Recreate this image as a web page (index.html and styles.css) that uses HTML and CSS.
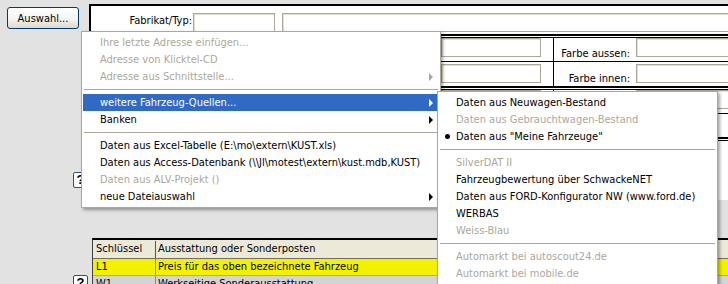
FILE: index.html
```html
<!DOCTYPE html>
<html lang="de">
<head>
    <meta charset="UTF-8">
    <title>Fahrzeugauswahl</title>
    <link rel="stylesheet" href="styles.css">
</head>
<body>
    <div class="screen">
        <div class="side">
            <button class="btn">Auswahl...</button>
            <span class="help help-top">?</span>
        </div>
        <div class="frame">
            <div class="row row-head">
                <span class="lbl lbl-typ">Fabrikat/Typ:</span>
                <span class="field field-typ"></span>
                <span class="field field-wide"></span>
            </div>
            <div class="rule-double"></div>
            <div class="row">
                <div class="cell-a"><span class="field field-a"></span></div>
                <div class="cell-b"><span class="lbl">Farbe aussen:</span><span class="field field-b"></span></div>
            </div>
            <div class="rule"></div>
            <div class="row row-gap">
                <div class="cell-a"><span class="field field-a"></span></div>
                <div class="cell-b"><span class="lbl">Farbe innen:</span><span class="field field-b"></span></div>
            </div>
            <div class="rule-double"></div>
            <div class="row">
                <div class="cell-a"><span class="field field-a"></span></div>
                <div class="cell-b"><span class="lbl"></span><span class="field field-b"></span></div>
            </div>
            <div class="rule"></div>
            <div class="row">
                <div class="cell-a"></div>
                <div class="cell-b"></div>
            </div>
            <div class="rule-double"></div>
        </div>
    </div>

    <div class="lower">
        <div class="side side-low">
            <span class="help">?</span>
        </div>
        <div class="grid">
            <div class="grid-row grid-head">
                <span class="c1">Schlüssel</span>
                <span class="c2">Ausstattung oder Sonderposten</span>
            </div>
            <div class="grid-row grid-sel">
                <span class="c1">L1</span>
                <span class="c2">Preis für das oben bezeichnete Fahrzeug</span>
            </div>
            <div class="grid-row">
                <span class="c1">W1</span>
                <span class="c2">Werkseitige Sonderausstattung</span>
            </div>
        </div>
    </div>

    <!-- Kontextmenue -->
    <div class="menu main-menu">
        <div class="item off">Ihre letzte Adresse einfügen...</div>
        <div class="item off">Adresse von Klicktel-CD</div>
        <div class="item off">Adresse aus Schnittstelle...<span class="arrow"></span></div>
        <div class="sep"></div>
        <div class="item hot">weitere Fahrzeug-Quellen...<span class="arrow"></span></div>
        <div class="item">Banken<span class="arrow"></span></div>
        <div class="sep"></div>
        <div class="item">Daten aus Excel-Tabelle (E:\mo\extern\KUST.xls)</div>
        <div class="item">Daten aus Access-Datenbank (\\Jl\motest\extern\kust.mdb,KUST)</div>
        <div class="item off">Daten aus ALV-Projekt ()</div>
        <div class="item">neue Dateiauswahl<span class="arrow"></span></div>
    </div>

    <div class="menu sub-menu">
        <div class="item">Daten aus Neuwagen-Bestand</div>
        <div class="item off">Daten aus Gebrauchtwagen-Bestand</div>
        <div class="item"><span class="dot"></span>Daten aus "Meine Fahrzeuge"</div>
        <div class="sep"></div>
        <div class="item off">SilverDAT II</div>
        <div class="item">Fahrzeugbewertung über SchwackeNET</div>
        <div class="item">Daten aus FORD-Konfigurator NW (www.ford.de)</div>
        <div class="item">WERBAS</div>
        <div class="item off">Weiss-Blau</div>
        <div class="sep"></div>
        <div class="item off">Automarkt bei autoscout24.de</div>
        <div class="item off">Automarkt bei mobile.de</div>
    </div>
</body>
</html>
```

FILE: styles.css
```css
* {
    margin: 0;
    padding: 0;
    box-sizing: border-box;
}

body {
    font-family: "DejaVu Sans Condensed", "DejaVu Sans", sans-serif;
    font-size: 11px;
    color: #000;
    background: #e2e2e2;
    width: 728px;
    height: 284px;
    overflow: hidden;
    position: relative;
}

/* oberer Bereich */
.screen {
    display: flex;
    padding-top: 4px;
    height: 200px;
}

.side {
    width: 89px;
    flex: none;
    display: flex;
    flex-direction: column;
    align-items: flex-start;
}

.btn {
    width: 72px;
    height: 22px;
    margin: 3px 0 0 7px;
    border: 1px solid #003c74;
    border-radius: 3px;
    background: linear-gradient(#ffffff, #f4f4f0 55%, #dcd8cc);
    font: inherit;
    color: #000;
}

.help {
    width: 15px;
    height: 16px;
    margin-left: 73px;
    border: 1px solid #2c4f8c;
    border-radius: 2px;
    background: #fff;
    font-family: "Liberation Sans", sans-serif;
    font-weight: bold;
    font-size: 13px;
    line-height: 14px;
    text-align: center;
}

.help-top {
    margin-top: 143px;
}

.frame {
    flex: 1;
    background: #fff;
    border-left: 2px solid #000;
    border-top: 2px solid #000;
    overflow: hidden;
}

.row {
    display: flex;
    height: 23px;
}

.row-gap {
    height: 24px;
}

.row-head {
    height: 28px;
}

.lbl {
    white-space: nowrap;
    line-height: 13px;
}

.lbl-typ {
    width: 101px;
    text-align: right;
    padding-top: 8px;
}

.field {
    display: block;
    height: 19px;
    background: #fff;
    border: 1px solid #aca899;
    box-shadow: inset 1px 1px 0 #e2dfd3;
}

.field-typ {
    width: 82px;
    margin: 7px 0 0 1px;
}

.field-wide {
    flex: 1;
    margin: 7px -6px 0 7px;
}

.rule {
    height: 1px;
    background: #000;
}

.rule-double {
    height: 4px;
    border-top: 2px solid #000;
    border-bottom: 1px solid #000;
}

.cell-a {
    width: 463px;
    flex: none;
    border-right: 1px solid #000;
    display: flex;
    align-items: flex-start;
}

.row-gap .cell-a .field,
.row-gap .cell-b .field {
    margin-top: 2px;
}

.field-a {
    width: 100px;
    margin-left: 350px;
}

.cell-b {
    flex: 1;
    display: flex;
    align-items: flex-start;
}

.cell-b .lbl {
    width: 82px;
    flex: none;
    text-align: right;
    padding: 9px 6px 0 0;
}

.row-gap .cell-b .lbl {
    padding-top: 10px;
}

.field-b {
    flex: 1;
    margin-right: -6px;
}

/* Tabelle unten */
.lower {
    display: flex;
    padding-top: 38px;
}

.side-low {
    width: 92px;
}

.side-low .help {
    margin-top: 37px;
}

.grid {
    flex: 1;
    border-top: 2px solid #000;
    border-left: 1px solid #404040;
}

.grid-row {
    display: grid;
    grid-template-columns: 63px 1fr;
    height: 17px;
    background: #d4d4d4;
    border-bottom: 1px solid #a8a8a8;
    line-height: 16px;
}

.grid-head {
    height: 19px;
    padding-top: 1px;
    background: #ece9d8;
    border-bottom: 1px solid #716f64;
}

.grid-sel {
    background: #f2f200;
}

.c1 {
    padding-left: 3px;
    border-right: 1px solid #8a8a8a;
}

.grid-head .c1 {
    border-right-color: #555;
}

.c2 {
    padding-left: 2px;
    white-space: nowrap;
}

/* Menues */
.menu {
    position: absolute;
    background: #fff;
    border: 1px solid #aca899;
    padding: 2px 1px;
    box-shadow: 2px 2px 3px rgba(0, 0, 0, 0.35);
}

.main-menu {
    left: 81px;
    top: 31px;
    width: 360px;
}

.sub-menu {
    left: 437px;
    top: 91px;
    width: 281px;
    height: 210px;
}

.item {
    position: relative;
    display: flex;
    align-items: center;
    height: 17px;
    padding-left: 17px;
    white-space: nowrap;
}

.item.off {
    color: #aca899;
}

.item.hot {
    background: #316ac5;
    color: #fff;
}

.arrow {
    margin-left: auto;
    margin-right: 6px;
    border-left: 4px solid #000;
    border-top: 4px solid transparent;
    border-bottom: 4px solid transparent;
}

.off .arrow {
    border-left-color: #aca899;
}

.hot .arrow {
    border-left-color: #fff;
}

.dot {
    position: absolute;
    left: 6px;
    top: 6px;
    width: 5px;
    height: 5px;
    border-radius: 50%;
    background: #000;
}

.sep {
    height: 9px;
    padding: 4px 1px;
}

.sep::before {
    content: "";
    display: block;
    height: 1px;
    background: #aca899;
}
```
